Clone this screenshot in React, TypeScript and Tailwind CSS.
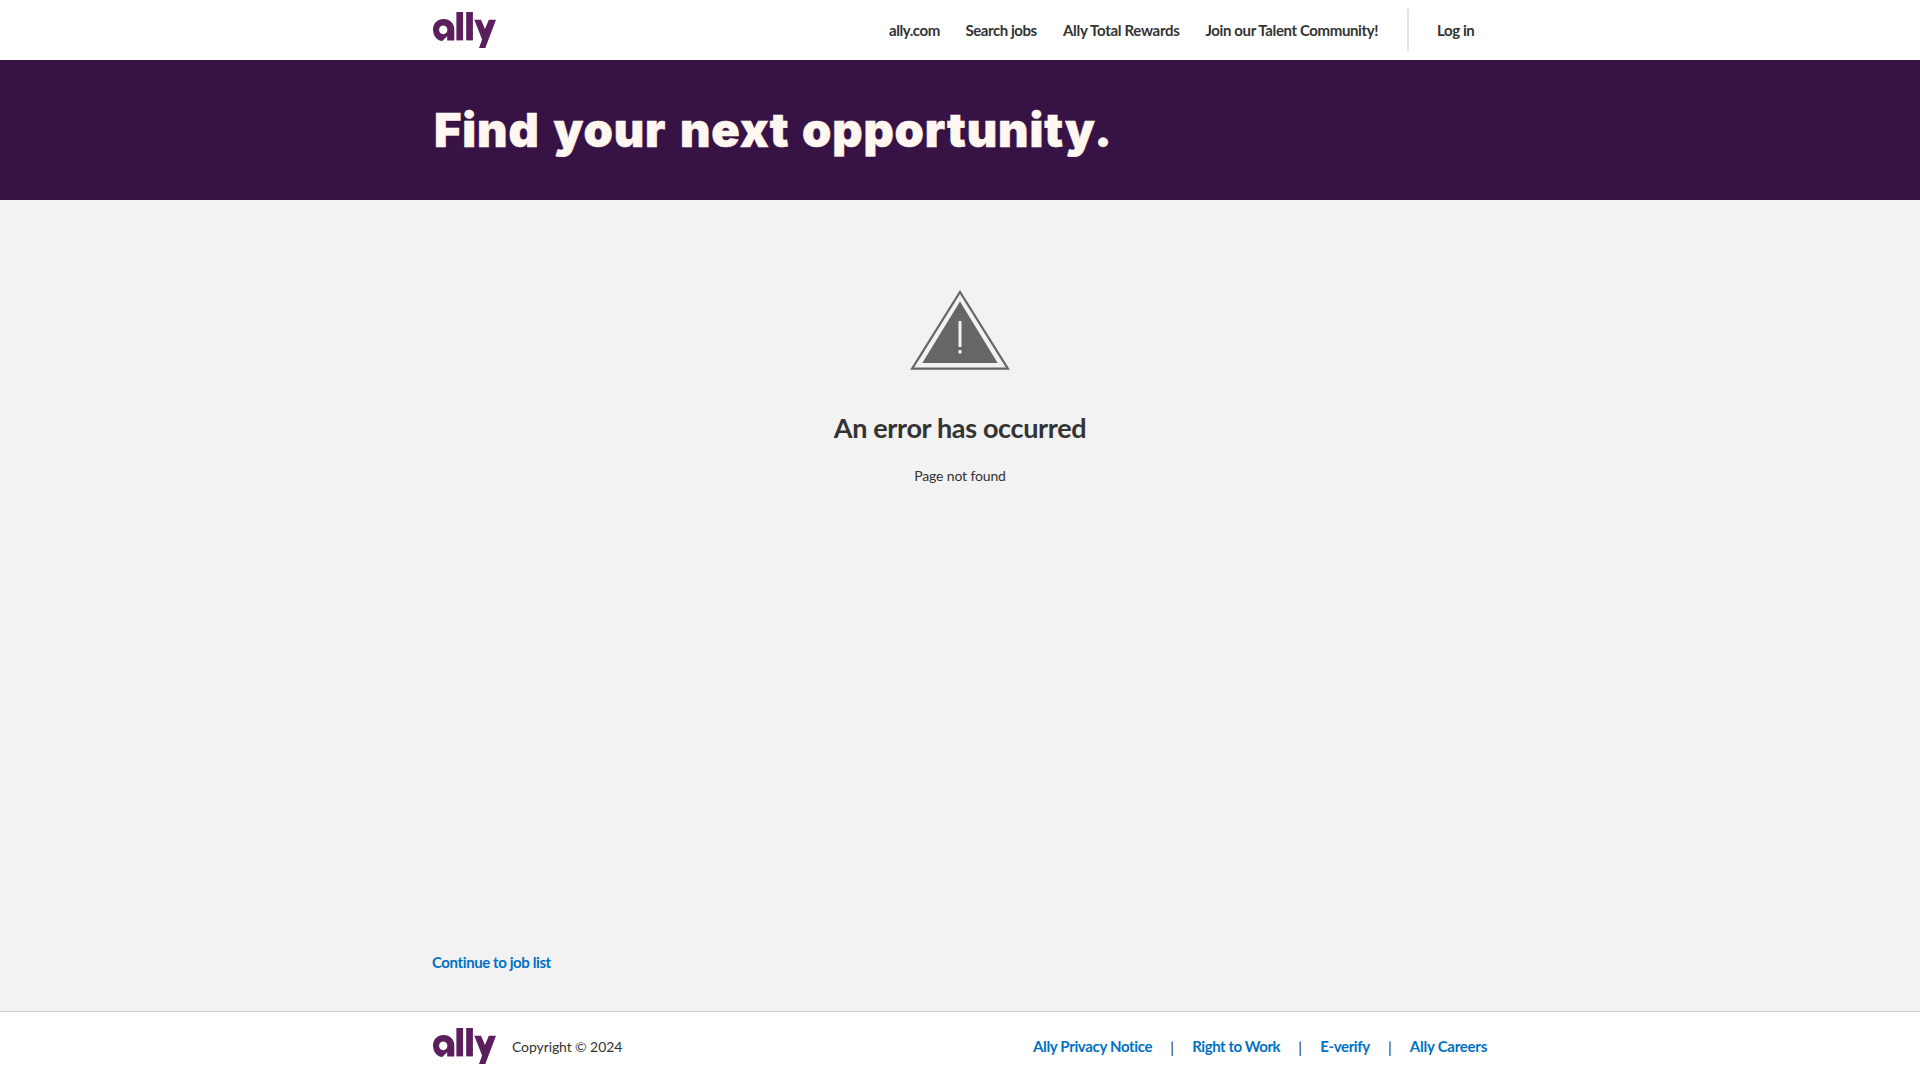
const nav = [
  { label: 'ally.com', cls: 'ml-[393px] w-[51px] tracking-[-0.44px]' },
  { label: 'Search jobs', cls: 'ml-[25.500px] w-[71px] tracking-[-0.45px]' },
  { label: 'Ally Total Rewards', cls: 'ml-[26.500px] w-[117px] tracking-[-0.3px]' },
  { label: 'Join our Talent Community!', cls: 'ml-[25.500px] w-[173px] tracking-[-0.38px]' },
];

const footerLinks = [
  { label: 'Ally Privacy Notice', cls: 'tracking-[-0.34px]' },
  { label: 'Right to Work', cls: 'tracking-[-0.43px]' },
  { label: 'E-verify', cls: 'tracking-[-0.37px]' },
  { label: 'Ally Careers', cls: 'tracking-[-0.25px]' },
];

function Logo() {
  return (
    <svg className="block h-9 w-[63px] shrink-0" viewBox="0 0 63 36" fill="#5a1f5c" role="img" aria-label="ally">
      <path d="M10.500 7C4.400 7 0 11.500 0 17.600C0 24 4.300 29 9.300 29L14.200 24.200V28.500H21.300V17.600C21.300 11.400 17 7 10.500 7ZM10.300 13.500C12.600 13.500 14.400 15.300 14.400 17.800C14.400 20.300 12.600 22.200 10.300 22.200C7.900 22.200 6.100 20.300 6.100 17.800C6.100 15.300 7.900 13.500 10.300 13.500Z" />
      <rect x="23.400" y="0" width="6.700" height="28.400" />
      <rect x="33.200" y="0" width="6.700" height="28.400" />
      <path d="M41.300 7.700H48L51.900 17L55.900 7.700H63L52.300 36H46L49.100 27.500Z" />
    </svg>
  );
}

export default function App() {
  return (
    <div className="flex h-[1080px] w-full flex-col overflow-hidden bg-[#f2f2f2] font-['Lato',sans-serif] text-[14px] leading-5 text-[#333]">
      <header className="h-[60px] shrink-0 bg-white">
        <div className="mx-auto flex h-full w-[1054px] items-center">
          <Logo />
          <nav className="flex items-center text-[15px] font-bold whitespace-nowrap">
            {nav.map((n) => (
              <a key={n.label} className={n.cls}>{n.label}</a>
            ))}
            <span className="ml-[28.500px] h-[42px] w-[2px] bg-[#e1e1e1]" />
            <a className="ml-[28px] tracking-[-0.4px]">Log in</a>
          </nav>
        </div>
      </header>
      <section className="h-[140px] shrink-0 bg-[#371345]">
        <h1 className="mx-auto flex h-[140px] w-[1054px] items-center pl-px font-['Inter',sans-serif] text-[47px] font-black tracking-[0.85px] whitespace-nowrap text-[#fff7f0] [-webkit-text-stroke:0.5px_#fff7f0]">
          <span className="w-[119.500px]">Find</span>
          <span className="w-[126.500px]">your</span>
          <span className="w-[122px]">next</span>
          <span>opportunity.</span>
        </h1>
      </section>
      <main className="mx-auto flex w-[1054px] grow flex-col">
        <div className="flex flex-col items-center pt-[90px]">
          <svg className="h-[80px] w-[100px]" viewBox="0 0 100 80">
            <path d="M50 2L97.900 78.700H2.100Z" fill="none" stroke="#666" strokeWidth="2.200" />
            <path d="M50 11.500L87.700 73H12.300Z" fill="#666" />
            <path d="M50 31V57M50 60V63.500" stroke="#f2f2f2" strokeWidth="3" />
          </svg>
          <h2 className="mt-[42px] text-[27px] leading-8 font-bold tracking-[-0.34px]">An error has occurred</h2>
          <p className="mt-[22px] tracking-[-0.14px]">Page not found</p>
        </div>
        <a className="mt-auto mb-[39px] -ml-px text-[15px] font-bold tracking-[-0.4px] text-[#0071c5]">Continue to job list</a>
      </main>
      <footer className="h-[69px] shrink-0 border-t border-[#ccc] bg-white">
        <div className="mx-auto flex h-[68px] w-[1054px] items-center">
          <Logo />
          <span className="ml-4 pt-px tracking-[-0.1px]">Copyright © 2024</span>
          <div className="ml-auto flex items-center text-[15px] font-bold text-[#0071c5]">
            {footerLinks.map((l, i) => (
              <span key={l.label} className="flex items-center">
                {i > 0 && <span className="w-[40px] pt-px text-center font-normal text-[#333]">|</span>}
                <a className={l.cls}>{l.label}</a>
              </span>
            ))}
          </div>
        </div>
      </footer>
    </div>
  );
}
